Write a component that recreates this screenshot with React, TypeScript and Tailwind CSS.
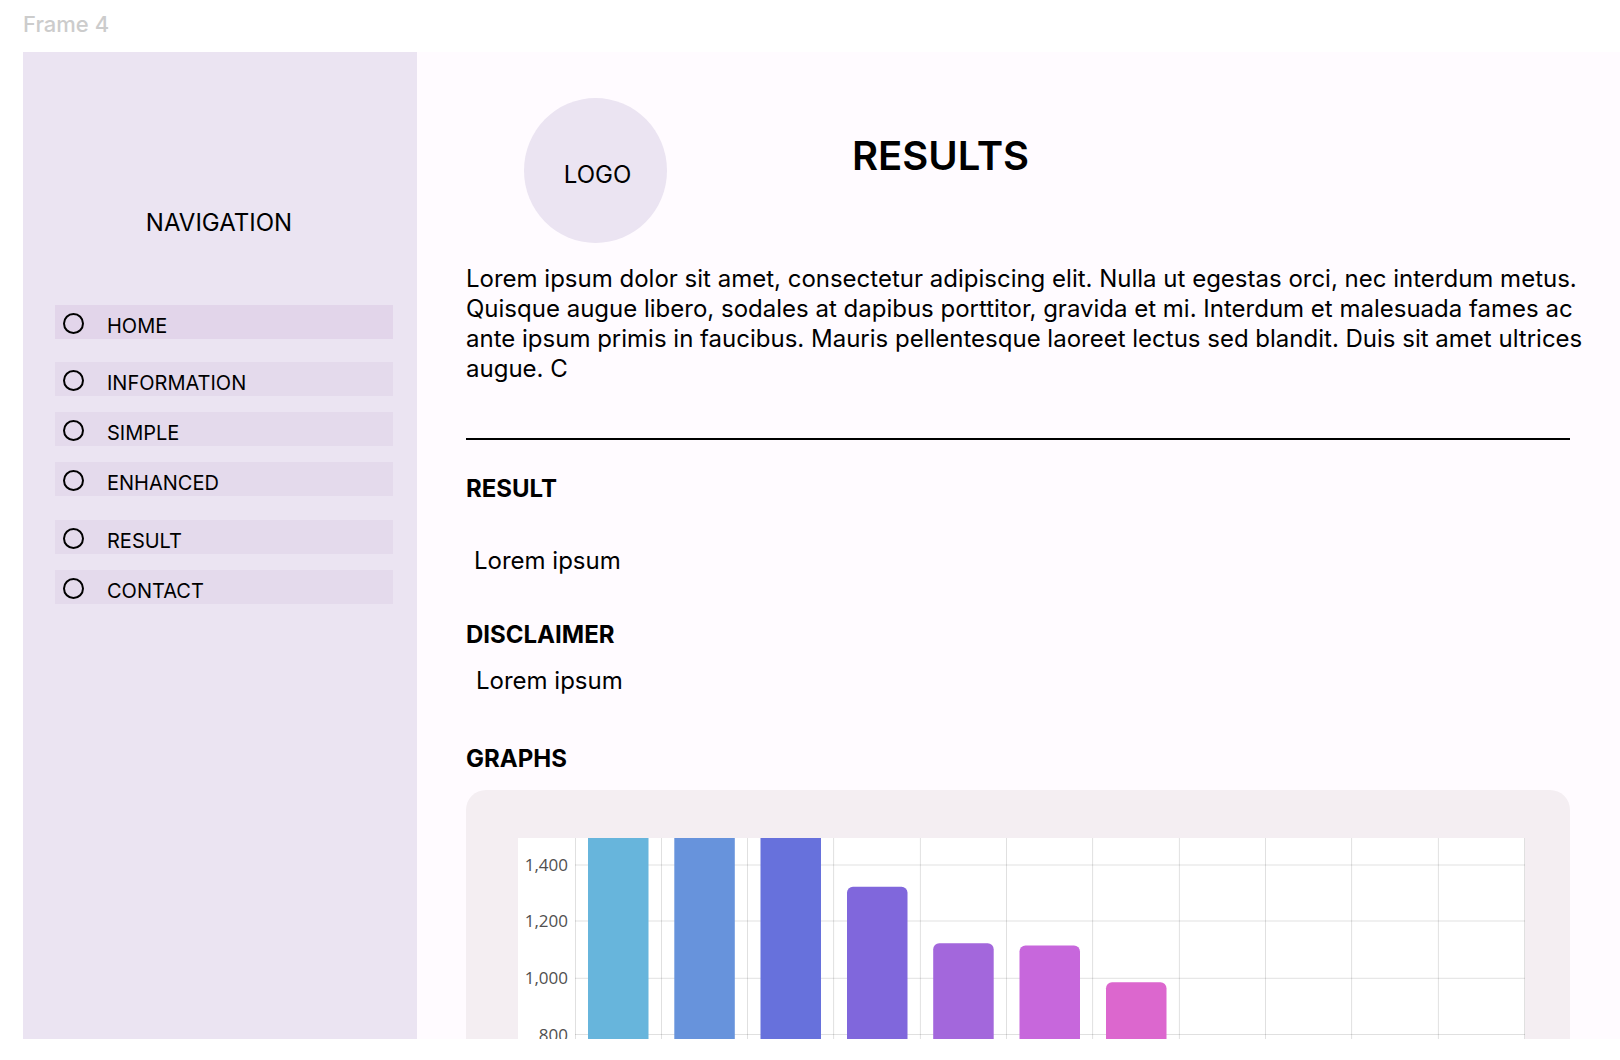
const navItems = [
  { label: 'HOME', className: 'bg-[#e2d5ea]' },
  { label: 'INFORMATION', className: 'mt-[23px] bg-[#e4daec]' },
  { label: 'SIMPLE', className: 'mt-4 bg-[#e4daec]' },
  { label: 'ENHANCED', className: 'mt-4 bg-[#e4daec]' },
  { label: 'RESULT', className: 'mt-6 bg-[#e4daec]' },
  { label: 'CONTACT', className: 'mt-4 bg-[#e4daec]' },
];

const gridX = [57.5, 143.5, 229.5, 315.6, 402.4, 488.5, 574.6, 661.4, 747.5, 833.6, 920.4, 1006.5];

const gridY = [
  { y: 27, label: '1,400' },
  { y: 83, label: '1,200' },
  { y: 140.3, label: '1,000' },
  { y: 196.5, label: '800' },
];

const bars = [
  { x: 70, y: -20, fill: '#67b5dc' },
  { x: 156.3, y: -20, fill: '#6793dc' },
  { x: 242.5, y: -20, fill: '#6771dc' },
  { x: 329, y: 48.8, fill: '#8067dc' },
  { x: 415.2, y: 105.3, fill: '#a367dc' },
  { x: 501.5, y: 107.6, fill: '#c767dc' },
  { x: 588, y: 144.3, fill: '#dc67ce' },
];

function Sidebar() {
  return (
    <aside className="w-[394px] shrink-0 bg-[#ebe4f2] px-8 pt-[156px] pr-6">
      <h2 className="pr-[10px] text-center text-[24px] leading-[30px]">NAVIGATION</h2>
      <nav aria-label="Main" className="mt-[67px] flex flex-col">
        {navItems.map((item) => (
          <a
            key={item.label}
            href={`#${item.label.toLowerCase()}`}
            className={`flex h-[34px] items-start gap-[23px] pt-2 pl-2 text-[20px] leading-[26px] ${item.className}`}
          >
            <span className="size-[21px] shrink-0 rounded-full border-2 border-black" />
            <span>{item.label}</span>
          </a>
        ))}
      </nav>
    </aside>
  );
}

function Chart() {
  return (
    <svg
      viewBox="0 0 1007 201"
      className="block w-full bg-white"
      role="img"
      aria-label="Bar chart of results"
    >
      <g stroke="#000" strokeOpacity="0.12">
        {gridX.map((x) => (
          <line key={x} x1={x} x2={x} y1="0" y2="201" />
        ))}
        {gridY.map(({ y }) => (
          <line key={y} x1="57" x2="1007" y1={y} y2={y} />
        ))}
      </g>
      {bars.map((bar) => (
        <rect key={bar.x} x={bar.x} y={bar.y} width="60.5" height="240" rx="6" fill={bar.fill} />
      ))}
      <g fill="#505050" fontSize="17" textAnchor="end" className="font-['Open_Sans',sans-serif]">
        {gridY.map(({ y, label }) => (
          <text key={label} x="50" y={y + 6}>
            {label}
          </text>
        ))}
      </g>
    </svg>
  );
}

export default function App() {
  return (
    <div className="min-h-screen bg-white pb-[21px] pl-[23px] font-['Inter',sans-serif] text-black">
      <p className="pt-[10px] pb-[14px] text-[22px] leading-7 font-medium text-[#cccccc]">Frame 4</p>
      <div className="flex">
        <Sidebar />
        <main className="min-w-0 flex-1 bg-[#fffbff] pl-[49px]">
          <header className="flex items-start pt-[46px] pl-[58px]">
            <div className="flex h-[145px] w-[143px] items-center justify-center rounded-[50%] bg-[#ebe4f2] pt-2 pl-1 text-[24px] leading-[30px]">
              LOGO
            </div>
            <h1 className="mt-[34px] ml-[185px] text-[40px] leading-[48px] font-semibold">RESULTS</h1>
          </header>
          <p className="mt-[21px] pr-7 text-[24px] leading-[30px]">
            Lorem ipsum dolor sit amet, consectetur adipiscing elit. Nulla ut egestas orci, nec interdum
            metus. Quisque augue libero, sodales at dapibus porttitor, gravida et mi. Interdum et malesuada
            fames ac ante ipsum primis in faucibus. Mauris pellentesque laoreet lectus sed blandit. Duis sit
            amet ultrices augue. C
          </p>
          <div className="mr-[50px]">
            <hr className="mt-[54px] border-t-2 border-black" />
            <section className="pt-[34px] text-[24px] leading-[30px]">
              <h2 className="font-bold">RESULT</h2>
              <p className="mt-[42px] pl-2">Lorem ipsum</p>
            </section>
            <section className="pt-11 text-[24px] leading-[30px]">
              <h2 className="font-bold">DISCLAIMER</h2>
              <p className="mt-4 pl-[10px]">Lorem ipsum</p>
            </section>
            <section className="pt-12">
              <h2 className="text-[24px] leading-[30px] font-bold">GRAPHS</h2>
              <div className="mt-4 rounded-t-[20px] bg-[#f4eef2] pt-12 pr-[45px] pl-[52px]">
                <Chart />
              </div>
            </section>
          </div>
        </main>
      </div>
    </div>
  );
}
